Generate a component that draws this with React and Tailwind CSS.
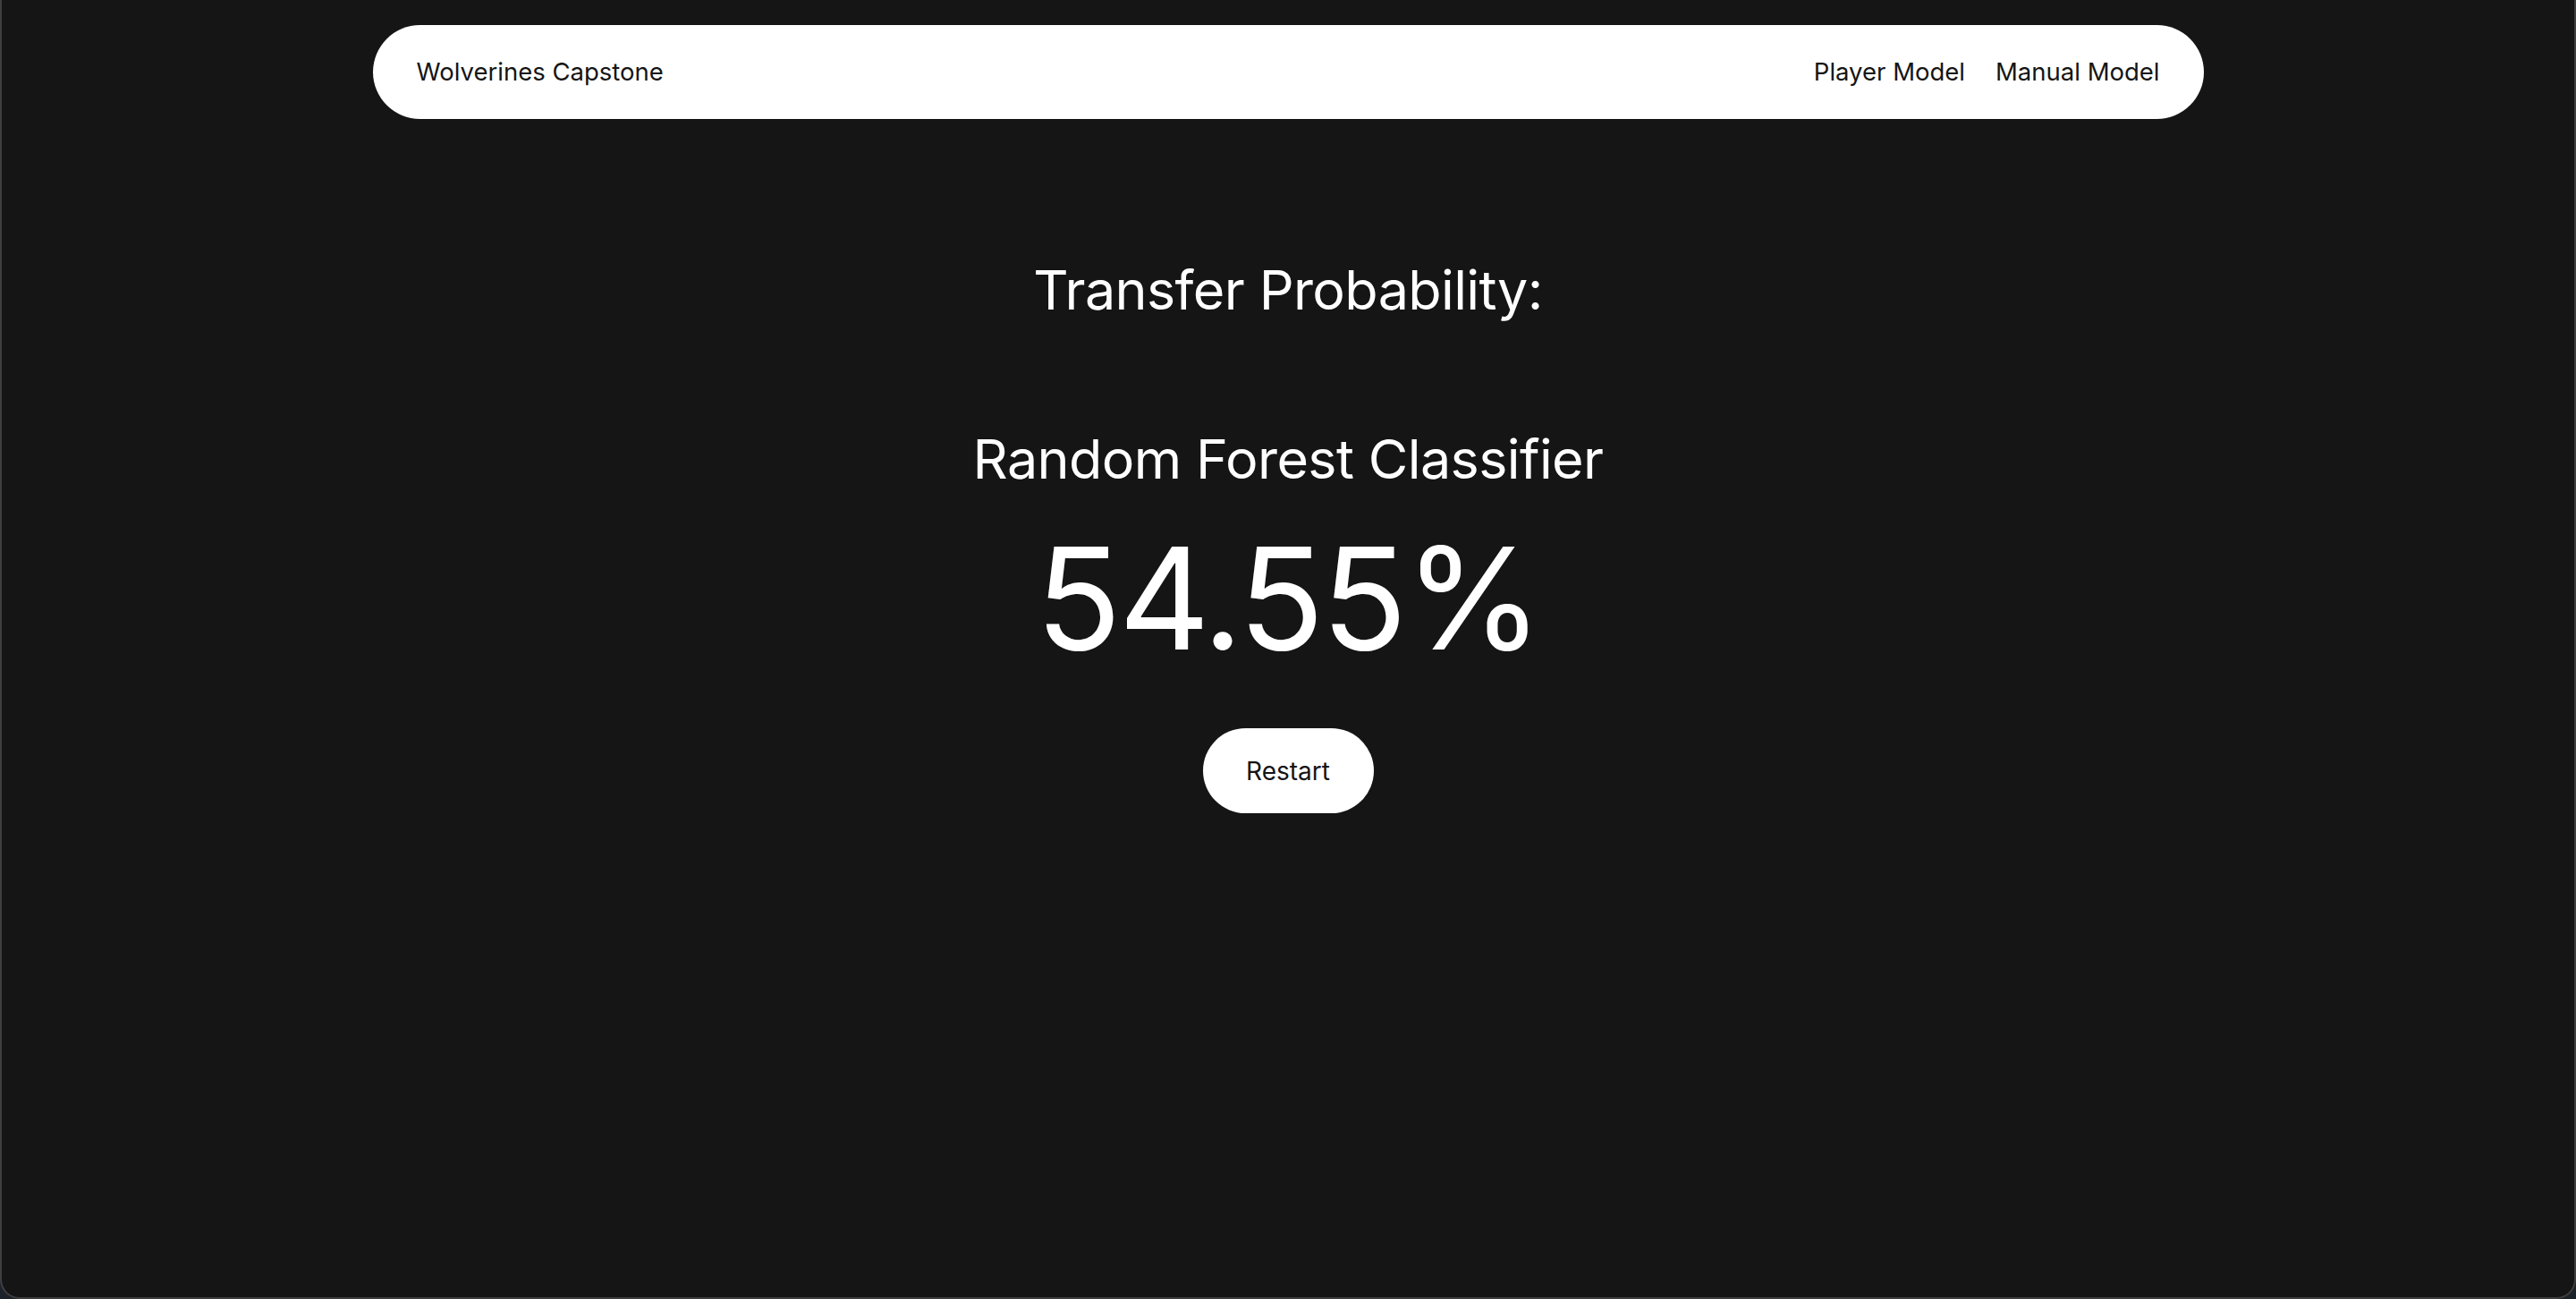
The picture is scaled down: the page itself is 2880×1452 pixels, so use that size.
import React from "react";

export default function App() {
  return (
    <div className="w-[2880px] h-[1452px] bg-[#1b2229] font-['Inter',sans-serif]">
      <div className="h-full bg-[#151515] border-x-2 border-b-2 border-[#3f3f3f] rounded-b-[22px] flex flex-col items-center">
        {/* Nav */}
        <nav className="mt-[28px] w-[2047px] h-[105px] bg-white rounded-full flex items-center justify-between px-[49px] text-[27.5px] text-[#151515]">
          <a href="#" className="leading-none">Wolverines Capstone</a>
          <div className="flex items-center gap-[34px] leading-none">
            <a href="#">Player Model</a>
            <a href="#">Manual Model</a>
          </div>
        </nav>

        <h2 className="mt-[161px] text-[61px] leading-none tracking-[-0.01em] text-white">Transfer Probability:</h2>

        <h3 className="mt-[128px] text-[61px] leading-none tracking-[-0.01em] text-white">Random Forest Classifier</h3>
        <div className="mt-[46px] text-[158px] leading-none tracking-[-0.02em] text-white">54.55%</div>

        <button className="mt-[66px] w-[191px] h-[95px] rounded-full bg-white text-[#151515] text-[28px] leading-none flex items-center justify-center">
          Restart
        </button>
      </div>
    </div>
  );
}
